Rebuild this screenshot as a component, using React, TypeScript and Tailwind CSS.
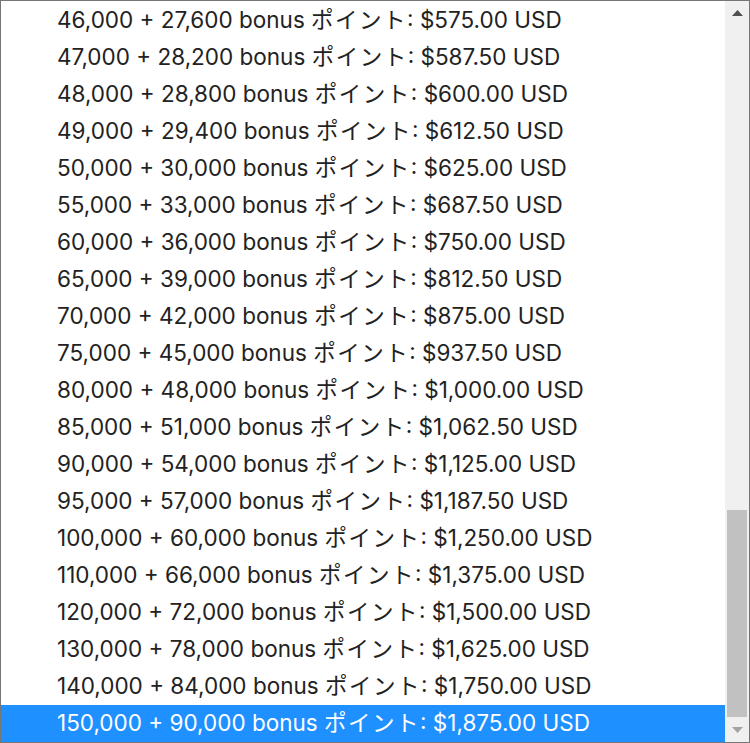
const POINTS = [
  46000, 47000, 48000, 49000, 50000, 55000, 60000, 65000, 70000, 75000, 80000, 85000, 90000, 95000, 100000,
  110000, 120000, 130000, 140000, 150000,
]

const fmt = (n: number) => n.toLocaleString('en-US')
const usd = (n: number) => n.toLocaleString('en-US', { minimumFractionDigits: 2, maximumFractionDigits: 2 })

export default function App() {
  const selected = 150000
  return (
    <div className="flex h-[743px] w-[750px] overflow-hidden border border-[#767676] bg-white font-['Inter','Noto_Sans_CJK_JP',sans-serif]">
      {/* options */}
      <ul className="flex flex-1 flex-col justify-end">
        {POINTS.map((p) => (
          <li
            key={p}
            className={
              'flex h-[37px] shrink-0 items-center pb-[2px] pl-[56px] text-[22.5px] whitespace-pre ' +
              (p === selected ? 'bg-[#1e90ff] text-white' : 'text-[#222]')
            }
          >
            {fmt(p)} + {fmt(p * 0.6)} bonus <span className="tracking-[1.5px]">ポイント</span>: ${usd(p * 0.0125)} USD
          </li>
        ))}
      </ul>

      {/* scrollbar */}
      <div className="flex w-[24px] shrink-0 flex-col bg-[#f0f0f0]">
        <div className="flex h-[24px] items-center justify-center">
          <svg width="11" height="6" viewBox="0 0 11 6">
            <path d="M5.5 0 L11 6 L0 6 Z" fill="#505050" />
          </svg>
        </div>
        <div className="flex flex-1 flex-col justify-end px-[2px]">
          <div className="mb-[1px] h-[207px] bg-[#c1c1c1]" />
        </div>
        <div className="flex h-[24px] items-center justify-center">
          <svg width="11" height="6" viewBox="0 0 11 6">
            <path d="M0 0 L11 0 L5.5 6 Z" fill="#a3a3a3" />
          </svg>
        </div>
      </div>
    </div>
  )
}
